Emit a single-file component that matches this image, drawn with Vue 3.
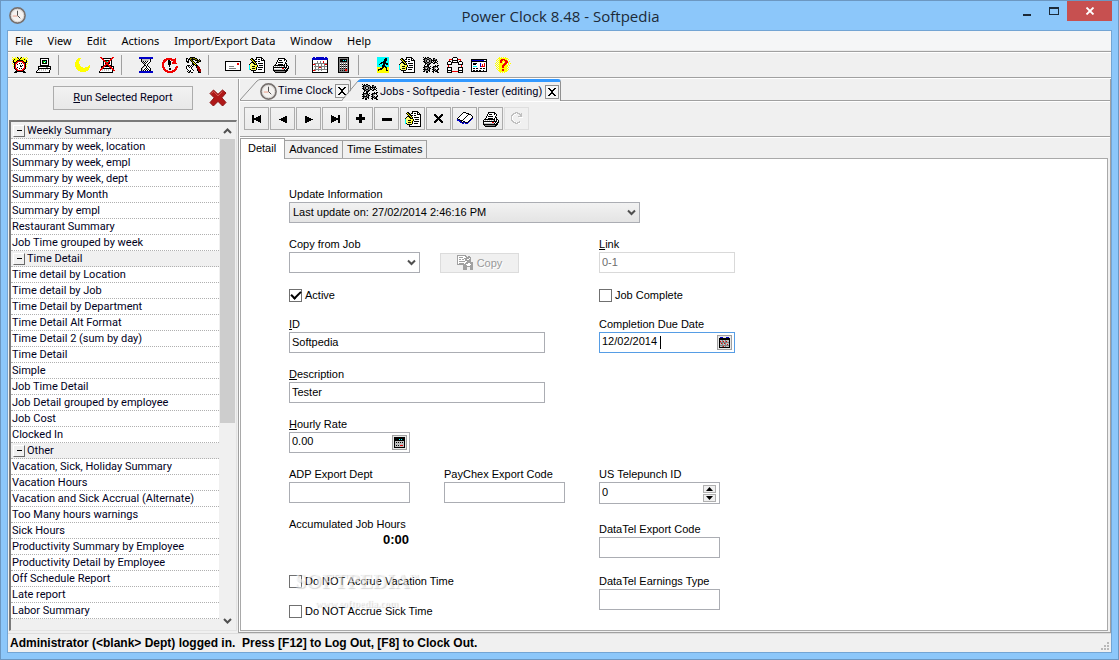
<script setup>
import { h } from 'vue'

const palette = {
  k: '#000000', r: '#f00000', y: '#ffff00', w: '#ffffff', g: '#808080', l: '#c0c0c0',
  b: '#0000c8', c: '#00ffff', n: '#00c000', d: '#a00000', m: '#808000', p: '#ffff70',
}

const bitmaps = {
  alarm: [
    'y..y.ky.yk.y..y.', '.yyyyyk.kyyyyy.y', 'yykyyyykyyyykyy.', '.kyyykkkkkkyyyk.',
    'ykyykrrrrrrkyyky', '.kkkrrwwwwrrkkk.', 'y.krrwwkwkwrrk.y', '.ykrwkwwwwwwrky.',
    '..krwwwwkwkwrk..', '.ykrwwwwkkwwrky.', '..krwkwwwwwwrk..', '..krrwwkwkwrrk..',
    '...krrwwwwrrk...', '....krrrrrrk....', '...kkkkkkkkkk...', '..kkk......kkk..'],
  pc: [
    '................', '....kkkkkkkkk...', '....kwwwwwwwk...', '....kwkkkkkwk...',
    '....kwknnckwk...', '....kwknwnkwk...', '....kwkkkkkwk...', '....kwwwwwwwk...',
    '....kkkkkkkkk...', '..kkkkkkkkkkkkk.', '..kwwwwwwwggwwk.', '..kkkkkkkkkkkkk.',
    '..klwlwlwlwlwwk.', '.kwlwlwlwlwwwk..', 'kwwwwwwwwwwwwk..', 'kkkkkkkkkkkkkk..'],
  moon: [
    '................', '...yyy..........', '..yyy...........', '.yyyy...........',
    '.yyy............', 'yyyy............', 'yyyy............', 'yyyyy...........',
    'yyyyy.........y.', 'yyyyyy.......yy.', '.yyyyyyy..yyyyy.', '.yyyyyyyyyyyyy..',
    '..yyyyyyyyyyyy..', '...yyyyyyyyyy...', '.....yyyyyy.....', '................'],
  pcx: [
    '.rr..........rr.', '..rrkkkkkkkkrr..', '...rrwwwwwwrr...', '....rrkkkkrrk...',
    '....krrncrrwk...', '....kwrrrrkwk...', '....kwkrrkkwk...', '....kwrrrrwwk...',
    '....krrkkrrkk...', '..kkrrkkkkrrkkk.', '..krrwwwwwgrrwk.', '..rrkkkkkkkkrrk.',
    '.rrlwlwlwlwlwrr.', '.rwlwlwlwlwwwkrr', 'kwwwwwwwwwwwwk..', 'kkkkkkkkkkkkkk..'],
  hourglass: [
    '.bbbbbbbbbbbbbb.', '.bbbbbbbbbbbbbb.', '...kllllllllk...', '...klllllllwk...',
    '...klkwkwkwwk...', '....klkwkwwk....', '.....klkwwk.....', '......klwk......',
    '......kkwk......', '.....klwkwk.....', '....klwwkwwk....', '...klwwkwkwwk...',
    '...klwkwkwkwk...', '...klkwkwkwkk...', '.bbbbbbbbbbbbbb.', '.bbbbbbbbbbbbbb.'],
  retry: [
    '................', '....rrrrrr...r..', '..rrrrrrrrrrrr..', '.rrrr.kk.rrrrr..',
    '.rrr..kkk..rrr..', 'rrr...kkk.rrrr..', 'rr....kkk.rrrrr.', 'rr....kkk.......',
    'rr.....k........', 'rr.....k......rr', 'rrr..........rrr', '.rr....kk....rr.',
    '.rrr...kk...rrr.', '..rrrr....rrrr..', '...rrrrrrrrrr...', '.....rrrrrr.....'],
  tools: [
    '....kkkkk.......', 'kk.kmmkmmkk.....', 'k.kkmkkkkmmk.k..', 'k.k.kmk..kkkkmk.',
    'kkk..kmk...kmkk.', '.kk...kyk.kkk...', '......kkyk......', '......kkkyk.....',
    '.kkk.kwk.kkk....', 'kwk.kwk...kdd...', 'kw.kwk....kddd..', 'kwwwwk.....ddd..',
    '.kwwwwk....kddd.', '..k.kwwk...kddd.', '.kwkkww.....kdd.', '..kk.kk.....kkk.'],
  mail: [
    '................', '................', '................', '................',
    'kkkkkkkkkkkkkkkk', 'kwwwwwwwwwwwwwwk', 'kwwwwwwwwwwwrrwk', 'kwwwwwwwwwwwrrwk',
    'kwwwwwwwwwwwwwwk', 'kwwwgggggwwwwwwk', 'kwwwwwwwwwwwwwwk', 'kwwwgggggggwwwwk',
    'kwwwwwwwwwwwwwwk', 'kkkkkkkkkkkkkkkk', '................', '................'],
  handdoc: [
    '.......kkkkkk...', '..kk...kwwwwkk..', '.kykk.kkwkkwkwk.', '..kykkwwwwwwkkkk',
    '...kykkkwkkwwwwk', '..kkkykwwwwwwwwk', '.kppkkykwkkkkkwk', 'kppppkkkwwwwwwwk',
    'cppppypykwkkkkwk', 'cppkkkpykwwwwwwk', 'cpppypykwkkkkkwk', 'cppkkkykwwwwwwwk',
    'ckpppppkwkkkkwwk', '..kkkkkwwwwwwwwk', '....kwwwwwwwwwwk', '....kkkkkkkkkkkk'],
  printer: [
    '................', '.....kkkkkkk....', '.....kwwwwwkk...', '....kwkkkwwkwk..',
    '....kwwwwwwwwk..', '...kwkkkkkwwk...', '...kwwwwwwwwkk..', '..kwwkkkkkwkwk..',
    '.kkkkkkkkkkkwkk.', 'kwlwlwlwlwlkwkwk', 'kkkkkkkkkkkkkkwk', 'kwwwwwwwwrrwkwkk',
    'kllllllllllkwkk.', 'kkkkkkkkkkkkkkk.', '.kggggggggggkk..', '..kkkkkkkkkkk...'],
  calendar: [
    '.bb.bbbbbbbb.bb.', 'bbbbbbbbbbbbbbbb', 'bbbbbbbbbbbbbbbb', 'kwwwwwwwwwwwwwwk',
    'kwwwwgwwgwwrwwwk', 'kwwwwgwwgwwrwwwk', 'kwgggggggggggggk', 'krrgwwgwwgwwgrrk',
    'kwwgwwgwwgwwgwwk', 'kwgggggggggggggk', 'kwwgwwgrrgwwgwwk', 'kwwgwwgwwgwwgwwk',
    'kwgggggggggggggk', 'krrgwwgwwgwwwwwk', 'kwwwwwwwwwwwwwwk', 'kkkkkkkkkkkkkkkk'],
  calc: [
    '..kkkkkkkkkkk...', '..kgggggggggk...', '..kgkkkkkkkgk...', '..kgkkkckckgk...',
    '..kgkkkkkkkgk...', '..kgggggggggk...', '..kgwgwgwgwgk...', '..kgkgkgkgkgk...',
    '..kgwgwgwgwgk...', '..kgkgkgkgkgk...', '..kgwgwgwgwgk...', '..kgkgkgkgkgk...',
    '..kggggggrrgk...', '..kgkgkgkrrgk...', '..kgggggggggk...', '..kkkkkkkkkkk...'],
  walk: [
    '..cccccccccccc..', '..cccccccckkcc..', '..ccccccckkkcc..', '..ccccccckkkcc..',
    '..cccccckkkccc..', '..cccckkkkkccc..', '..ccckkckkkkkc..', '..cckccckkckkc..',
    '..ccccckkkcccc..', '..ccccckkkkccc..', '..yyyyykkykkyy..', '..yyykkkyyykyy..',
    '..ykkkkyyyykyy..', '..ykyyyyyyykky..', '..yyyyyyyyyyyy..', '..yyyyyyyyyyyy..'],
  gears: [
    'k.k.kk..........', '.kkkggkk..kk....', 'kkggkkggk.kggk..', '.kgkllkgkkkkkk..',
    'kkgkllkgk.klk.k.', '.kkgkkggkk.kkk..', '..kkggkk..kk..k.', '..k.kkk.........',
    '.k..kk......k.kk', '.kkkkk.k..kkkkk.', 'kkgggkk..kkgg.k.', '.kg.kgkk..kg...k',
    'kkkkkgk..kkgk.kk', '.kgggkk...kkgkk.', 'kk.kk.k..kk.kkk.', '...kk.....k...kk'],
  people: [
    '......kkkk......', '.....kwwwwk.....', '..rrrkwwwwkrrr..', '..r..kkkkkk..r..',
    '.kkk.kwwwwk.kkk.', 'kwwwkkkkkkkkwwwk', 'kwwwk......kwwwk', 'kkkkk......kkkkk',
    '.r............r.', '.r............r.', 'kkkkk......kkkkk', 'kwwwk......kwwwk',
    'kwwwk......kwwwk', 'kkkkk......kkkkk', 'kwwwkrrrrrrkwwwk', 'kkkkk......kkkkk'],
  screen: [
    '................', '................', 'kkkkkkkkkkkkkkkk', 'kbbbbbbbbbbbbwwk',
    'kkkkkkkkkkkkkkkk', 'kwwwwwwwwwwwwwwk', 'kwkkkkwwwbwwwrwk', 'kwkkkwwwwbwrwrwk',
    'kwwwwwwwwbwrwrwk', 'kwccccwwwbrrrrwk', 'kwwwwwwwwwwwwwwk', 'kwkkwkkwwkkwkkwk',
    'kwwwwwwwwwwwwwwk', 'kwkkwkkwkkwwkwwk', 'kkkkkkkkkkkkkkkk', '................'],
  help: [
    '....y.y.y.y.....', '...yyyyyyyyyy...', '..y.yyrrrryy.y..', '.y.yyrrryrrry...',
    '..y.yrryyyrrr.y.', '.y.yyrry.yrrry..', 'y.y.yyyyyrrr.y.y', '.y.yyyyyrrry.y..',
    'y.y.yyyrrryyy.y.', '.y.yyyyrryyyy...', '..y.yyyrryyy.y..', '.y.yyyyyyyyyy...',
    '..y.yyyrryyy.y..', '...yyyyrryyyy...', '....yyyyyyyy....', '.....y.y.y......'],
  book: [
    '................', '......kkk.......', '.....kwwwkkk....', '....kwwwwwwkkk..',
    '...kwwwwwwkwwwk.', '..kwwwwwwkwwwwwk', '.kwwwwwwkwwwwwwk', 'kwwwwwwkwwwwwwkb',
    'bkkwwwkwwwwwwkb.', 'bbbkkkwwwwwwkb..', '..bbkwkkwwwkb...', '...bbkbbkkkb....',
    '.....bb.bbb.....', '................', '................', '................'],
  first: [
    '................', '................', '................', '................',
    '...kk......k....', '...kk....kkk....', '...kk..kkkkk....', '...kkkkkkkkk....',
    '...kkkkkkkkk....', '...kk..kkkkk....', '...kk....kkk....', '...kk......k....',
    '................', '................', '................', '................'],
  prev: [
    '................', '................', '................', '................',
    '................', '..........kk....', '........kkkk....', '......kkkkkk....',
    '....kkkkkkkk....', '......kkkkkk....', '........kkkk....', '..........kk....',
    '................', '................', '................', '................'],
  plus: [
    '................', '................', '................', '......kkk.......',
    '......kkk.......', '......kkk.......', '...kkkkkkkkk....', '...kkkkkkkkk....',
    '...kkkkkkkkk....', '......kkk.......', '......kkk.......', '......kkk.......',
    '................', '................', '................', '................'],
  minus: [
    '................', '................', '................', '................',
    '................', '................', '................', '...kkkkkkkkkk...',
    '...kkkkkkkkkk...', '...kkkkkkkkkk...', '................', '................',
    '................', '................', '................', '................'],
  cross: [
    '................', '................', '................', '...kk.....kk....',
    '...kkk...kkk....', '....kkk.kkk.....', '.....kkkkk......', '......kkk.......',
    '.....kkkkk......', '....kkk.kkk.....', '...kkk...kkk....', '...kk.....kk....',
    '................', '................', '................', '................'],
  redo: [
    '................', '......lll.......', '....lllwlll.l...', '...llww...lll...',
    '..llw......ll...', '..lw.....llll...', '..lw......wwww..', '..lw............',
    '..lw............', '..llw...........', '...llw....l.....', '....lllwlllw....',
    '......lllww.....', '................', '................', '................'],
  copy: [
    'ggggggggg.......', 'gwwwwwwwgg.gg...', 'gwggggwwwggggg..', 'gwwwwwwgggggwg..',
    'gwggwggwggwwgg..', 'gwwwwwwwgggggg..', 'gwggggggwwgggg..', 'gwwwwwwwwggggggg',
    'gwgggggwgggwwggg', 'gggggggggwwwwwgg', '......ggggwwwggg', '......gggggggggg',
    '......gggg...ggg', '......gggg...ggg', '......gggg...ggg', '................'],
}

function mirror(rows) {
  return rows.map((row) => row.split('').reverse().join(''))
}
bitmaps.next = mirror(bitmaps.prev)
bitmaps.last = mirror(bitmaps.first)

const PixelIcon = (props) => {
  const rects = []
  bitmaps[props.name].forEach((row, y) => {
    let x = 0
    while (x < row.length) {
      let end = x + 1
      while (end < row.length && row[end] === row[x]) end++
      if (row[x] !== '.') {
        const fill = props.name === 'copy' && row[x] === 'g' ? '#a0a0a0' : palette[row[x]]
        rects.push(h('rect', { x, y, width: end - x, height: 1, fill }))
      }
      x = end
    }
  })
  return h('svg', {
    viewBox: '0 0 16 16', width: 16, height: 16,
    'shape-rendering': 'crispEdges', 'aria-hidden': 'true',
  }, rects)
}
PixelIcon.props = ['name']

const CloseMark = () => h('svg', { viewBox: '0 0 8 8', width: 8, height: 8, 'shape-rendering': 'crispEdges', 'aria-hidden': 'true' }, [
  h('path', { d: 'M0 0h2v1h1v1h2V1h1V0h2v1H7v1H6v1H5v2h1v1h1v1h1v1H6V7H5V6H3v1H2v1H0V7h1V6h1V5h1V3H2V2H1V1H0z' }),
])

const ClockIcon = () => h('svg', { viewBox: '0 0 16 16', width: 17, height: 17, 'aria-hidden': 'true' }, [
  h('circle', { cx: 8, cy: 8, r: 7.1, fill: '#f4f2f0', stroke: '#77716f', 'stroke-width': 1.6 }),
  h('circle', { cx: 8, cy: 8, r: 5.9, fill: 'none', stroke: '#cfcac8', 'stroke-width': 0.7 }),
  h('path', { d: 'M3.500 8.500H8', stroke: '#e89880', 'stroke-width': 0.9 }),
  h('path', { d: 'M8 3.500V8L10.600 10.600', fill: 'none', stroke: '#4a4a4a', 'stroke-width': 0.9 }),
])

const menus = ['File', 'View', 'Edit', 'Actions', 'Import/Export Data', 'Window', 'Help']

const toolGroups = [
  [['alarm', 'Clock in'], ['pc', 'Workstation']],
  [['moon', 'Night shift'], ['pcx', 'Disconnect']],
  [['hourglass', 'Hours'], ['retry', 'Recalculate'], ['tools', 'Setup']],
  [['mail', 'Messages'], ['handdoc', 'Report'], ['printer', 'Print']],
  [['calendar', 'Calendar'], ['calc', 'Calculator']],
  [['walk', 'Employees'], ['handdoc', 'Edit times'], ['gears', 'Jobs'], ['people', 'Departments'], ['screen', 'Display'], ['help', 'Help']],
]

const recordButtons = [
  ['first', 'First'], ['prev', 'Previous'], ['next', 'Next'], ['last', 'Last'], ['plus', 'Add'], ['minus', 'Remove'],
  ['handdoc', 'Edit'], ['cross', 'Cancel'], ['book', 'Browse'], ['printer', 'Print'], ['redo', 'Refresh'],
]

const reportGroups = [
  { title: 'Weekly Summary', items: ['Summary by week, location', 'Summary by week, empl', 'Summary by week, dept', 'Summary By Month', 'Summary by empl', 'Restaurant Summary', 'Job Time grouped by week'] },
  { title: 'Time Detail', items: ['Time detail by Location', 'Time detail by Job', 'Time Detail by Department', 'Time Detail Alt Format', 'Time Detail 2 (sum by day)', 'Time Detail', 'Simple', 'Job Time Detail', 'Job Detail grouped by employee', 'Job Cost', 'Clocked In'] },
  { title: 'Other', items: ['Vacation, Sick, Holiday Summary', 'Vacation Hours', 'Vacation and Sick Accrual (Alternate)', 'Too Many hours warnings', 'Sick Hours', 'Productivity Summary by Employee', 'Productivity Detail by Employee', 'Off Schedule Report', 'Late report', 'Labor Summary'] },
]
</script>

<template>
  <div class="window">
    <header class="titlebar">
      <ClockIcon />
      <h1>Power Clock 8.48 - Softpedia</h1>
      <div class="caption">
        <button aria-label="Minimize"><svg width="12" height="12" viewBox="0 0 12 12"><path d="M2 9h8v2H2z" fill="#1c2a38" /></svg></button>
        <button aria-label="Maximize"><svg width="12" height="12" viewBox="0 0 12 12" shape-rendering="crispEdges"><path d="M2 4h8v5H2zM1 2v8h10V2z" fill="#1c2a38" fill-rule="evenodd" /></svg></button>
        <button class="close" aria-label="Close"><svg width="10" height="8" viewBox="0 0 10 8"><path d="M1.500.5l7 7M8.500.5l-7 7" stroke="#fff" stroke-width="1.8" /></svg></button>
      </div>
    </header>

    <div class="client">
      <nav class="menubar">
        <button v-for="m in menus" :key="m">{{ m }}</button>
      </nav>

      <div class="toolbar">
        <div v-for="(group, i) in toolGroups" :key="i" class="tool-group">
          <button v-for="[icon, label] in group" :key="label" :aria-label="label"><PixelIcon :name="icon" /></button>
        </div>
      </div>

      <div class="workspace">
        <aside class="reports">
          <div class="report-actions">
            <button class="run"><span><u>R</u>un Selected Report</span></button>
            <button class="delete" aria-label="Close report list">
              <svg width="18" height="18" viewBox="0 0 18 18">
                <path d="M1 4.500L4.500 1 9 5.300 13.500 1 17 4 12.800 8.800 17 13.500 13.600 17 9 12.400 4.400 17 1 13.600 5.200 8.800z" fill="#b01818" stroke="#8c1010" />
                <path d="M2.400 4.400L4.500 2.400 9 6.800l4.400-4.300" fill="none" stroke="#d86058" />
              </svg>
            </button>
          </div>
          <div class="list">
            <div class="rows">
              <template v-for="g in reportGroups" :key="g.title">
                <div class="row group"><button class="fold" aria-label="Collapse group"></button>{{ g.title }}</div>
                <div v-for="item in g.items" :key="item" class="row">{{ item }}</div>
              </template>
            </div>
            <div class="scroll">
              <svg width="9" height="6" viewBox="0 0 9 6"><path d="M1 5l3.500-3.500L8 5" fill="none" stroke="#505050" stroke-width="2" /></svg>
              <div class="track"><div class="thumb"></div></div>
              <svg width="9" height="6" viewBox="0 0 9 6"><path d="M1 1l3.500 3.500L8 1" fill="none" stroke="#505050" stroke-width="2" /></svg>
            </div>
          </div>
        </aside>

        <main class="document">
          <div class="doc-tabs">
            <div class="doc-tab">
              <svg class="slant" width="20" height="21" viewBox="0 0 20 21"><path d="M0 21L17 2Q19 0 20 0V21z" fill="#f0f0f0" /><path d="M0 21L17 2Q19 .5 20 .5" fill="none" stroke="#909090" /></svg>
              <div class="doc-body">
                <ClockIcon /><span>Time Clock</span>
                <button aria-label="Close Time Clock"><CloseMark /></button>
              </div>
            </div>
            <div class="doc-tab active">
              <svg class="slant" width="20" height="22" viewBox="0 0 20 22"><path d="M0 22L17 2Q19 0 20 0V22z" fill="#f0f0f0" /><path d="M0 21L16 2Q18 .5 20 .5" fill="none" stroke="#909090" /><path d="M15 3l2-2q1-1 3-1v3z" fill="#3399ff" /></svg>
              <div class="doc-body">
                <PixelIcon name="gears" /><span>Jobs - Softpedia - Tester (editing)</span>
                <button aria-label="Close Jobs"><CloseMark /></button>
              </div>
            </div>
          </div>

          <div class="record-bar">
            <button v-for="[icon, label] in recordButtons" :key="label" :aria-label="label" :disabled="icon === 'redo'"><PixelIcon :name="icon" /></button>
          </div>

          <div class="page-wrap">
            <div class="page-tabs">
              <button class="selected">Detail</button>
              <button>Advanced</button>
              <button>Time Estimates</button>
            </div>
            <form class="page" @submit.prevent>
              <div class="stack left">
                <div class="field update">
                  <label for="update">Update Information</label>
                  <div class="combo shaded">
                    <select id="update"><option>Last update on: 27/02/2014 2:46:16 PM</option></select>
                    <svg width="9" height="7" viewBox="0 0 9 7"><path d="M1 1.500l3.500 3.500L8 1.500" fill="none" stroke="#505050" stroke-width="2" /></svg>
                  </div>
                </div>
                <div class="pair">
                  <div class="field copy-from">
                    <label for="copyfrom">Copy from Job</label>
                    <div class="combo">
                      <select id="copyfrom"><option></option></select>
                      <svg width="9" height="7" viewBox="0 0 9 7"><path d="M1 1.500l3.500 3.500L8 1.500" fill="none" stroke="#505050" stroke-width="2" /></svg>
                    </div>
                  </div>
                  <button class="copy" disabled><PixelIcon name="copy" />Copy</button>
                </div>
                <label class="check"><input type="checkbox" checked />Active</label>
                <div class="field wide"><label for="id"><u>I</u>D</label><input id="id" type="text" value="Softpedia" /></div>
                <div class="field wide"><label for="desc"><u>D</u>escription</label><input id="desc" type="text" value="Tester" /></div>
                <div class="field narrow">
                  <label for="rate"><u>H</u>ourly Rate</label>
                  <div class="box"><input id="rate" type="text" value="0.00" /><button class="picker" aria-label="Calculator">
                    <svg width="11" height="11" viewBox="0 0 11 11" shape-rendering="crispEdges"><path d="M0 0h11v11H0z" /><path d="M1 4h9v6H1z" fill="#c0c0c0" /><path d="M2 5h1v1H2zM4 5h1v1H4zM6 5h1v1H6zM8 5h1v1H8zM2 8h1v1H2zM4 8h1v1H4z" /><path d="M5 2h1v1H5zM7 2h1v1H7z" fill="#0ff" /><path d="M6 8h3v1H6z" fill="#e00000" /></svg>
                  </button></div>
                </div>
                <div class="pair exports">
                  <div class="field narrow"><label for="adp">ADP Export Dept</label><input id="adp" type="text" /></div>
                  <div class="field narrow"><label for="paychex">PayChex Export Code</label><input id="paychex" type="text" /></div>
                </div>
                <div class="hours"><span>Accumulated Job Hours</span><output>0:00</output></div>
                <div class="accruals">
                  <label class="check"><input type="checkbox" />Do NOT Accrue Vacation Time</label>
                  <label class="check"><input type="checkbox" />Do NOT Accrue Sick Time</label>
                  <div class="watermark"><b>SOFTPEDIA<sup>™</sup></b><span>www.softpedia.com</span></div>
                </div>
              </div>

              <div class="stack right">
                <div class="field medium"><label for="link"><u>L</u>ink</label><input id="link" type="text" value="0-1" disabled /></div>
                <label class="check"><input type="checkbox" />Job Complete</label>
                <div class="field medium due">
                  <label for="due">Completion Due Date</label>
                  <div class="box focus"><input id="due" type="text" value="12/02/2014" /><button class="picker" aria-label="Calendar">
                    <svg width="11" height="11" viewBox="0 0 11 11" shape-rendering="crispEdges"><path d="M0 1h11v10H0z" /><path d="M1 0h3v1H1zM7 0h3v1H7z" fill="#0000c0" /><path d="M1 3h9v7H1z" fill="#c0c0c0" /><path d="M3 3h1v7H3zM6 3h1v7H6zM1 5h9v1H1zM1 8h9v1H1z" fill="#808080" /><path d="M1 4h1v1H1zM4 4h1v1H4zM7 4h1v1H7zM2 6h1v1H2zM5 6h1v1H5zM8 7h1v1H8zM4 9h1v1H4z" fill="#e00000" /></svg>
                  </button><i class="caret"></i></div>
                </div>
                <div class="field narrow telepunch">
                  <label for="tele">US Telepunch ID</label>
                  <div class="box"><input id="tele" type="text" value="0" />
                    <div class="spin">
                      <button aria-label="Increase"><svg width="7" height="4" viewBox="0 0 7 4"><path d="M0 4L3.500 0 7 4z" /></svg></button>
                      <button aria-label="Decrease"><svg width="7" height="4" viewBox="0 0 7 4"><path d="M0 0l3.500 4L7 0z" /></svg></button>
                    </div>
                  </div>
                </div>
                <div class="stack datatel">
                  <div class="field narrow"><label for="dtcode">DataTel Export Code</label><input id="dtcode" type="text" /></div>
                  <div class="field narrow"><label for="dttype">DataTel Earnings Type</label><input id="dttype" type="text" /></div>
                </div>
              </div>
            </form>
          </div>
        </main>
      </div>

      <footer class="status">
        <span>Administrator (&lt;blank&gt; Dept) logged in.&nbsp; Press [F12] to Log Out, [F8] to Clock Out.</span>
        <svg width="9" height="9" viewBox="0 0 9 9"><path d="M6 0h2v2H6zM3 3h2v2H3zM6 3h2v2H6zM0 6h2v2H0zM3 6h2v2H3zM6 6h2v2H6z" fill="#b8b8b8" /></svg>
      </footer>
    </div>
  </div>
</template>

<style>
body { background: #8cc7fa; }
</style>

<style scoped>
* { box-sizing: border-box; }
button, input, select { font: inherit; color: inherit; margin: 0; padding: 0; border: 0; background: none; border-radius: 0; outline: 0; min-width: 0; }
button { display: flex; align-items: center; justify-content: center; white-space: nowrap; }
svg { display: block; flex: none; }

.window {
  min-height: 100vh; display: flex; flex-direction: column;
  border: 1px solid #6c97c1; background: #8cc7fa; padding: 0 6px 6px;
  font-family: "Liberation Sans", Arial, sans-serif; font-size: 11px; line-height: 15px; color: #000;
}
.titlebar { height: 29px; display: grid; grid-template-columns: 1fr auto 1fr; align-items: center; padding-left: 2px; }
.titlebar h1 { margin: 0; font: 15px/20px "Open Sans", "Noto Sans", sans-serif; color: #1c2a38; }
.caption { display: flex; justify-self: end; align-self: start; }
.caption button { width: 27px; height: 20px; }
.caption .close { width: 45px; background: #c75050; }

.client { flex: 1; display: flex; flex-direction: column; border: 1px solid #73a5d4; background: #f0f0f0; }
.menubar { display: flex; gap: 1px; height: 20px; background: #f5f6f7; border-bottom: 1px solid #ebebeb; font: 11px/20px "Noto Sans", sans-serif; }
.menubar button { padding: 0 7px; }
.toolbar { display: flex; height: 27px; border-top: 1px solid #a0a0a0; border-bottom: 1px solid #a0a0a0; box-shadow: inset 0 1px #fff, 0 1px #fff; align-items: center; padding-top: 1px; }
.tool-group { display: flex; align-items: center; }
.tool-group button { width: 24px; height: 24px; }
.tool-group + .tool-group { padding-left: 15px; background: linear-gradient(#a0a0a0, #a0a0a0) 2px 2px / 1px 20px no-repeat; }

.workspace { flex: 1; display: flex; min-height: 0; padding-top: 1px; }
.reports { width: 230px; flex: none; display: flex; flex-direction: column; font: 11px/15px Roboto, "Liberation Sans", sans-serif; color: #00001c; padding: 0 1px 2px 1px; }
.report-actions { height: 41px; display: flex; align-items: center; padding: 0 0 4px 44px; gap: 16px; }
.run { width: 140px; height: 24px; border: 1px solid #acacac; background: linear-gradient(#f2f2f2, #e8e8e8); }
.list { flex: 1; display: flex; border: 1px solid #e3e3e3; border-top: 2px solid #7a7a7a; border-left: 2px solid #7a7a7a; }
.rows { flex: 1; min-width: 0; padding-top: 1px; }
.row { height: 16px; background: #fff; border-bottom: 1px dotted #b0b0b0; padding-left: 1px; white-space: nowrap; display: flex; align-items: center; }
.row.group { background: #f0f0f0; padding-left: 2px; gap: 2px; }
.fold { width: 12px; height: 12px; background: linear-gradient(#000, #000) center / 5px 1px no-repeat #f0f0f0; border: 1px solid #fff; border-right-color: #696969; border-bottom-color: #696969; }
.scroll { width: 17px; display: flex; flex-direction: column; align-items: center; padding: 6px 0; gap: 5px; }
.track { flex: 1; width: 15px; }
.thumb { height: 60%; background: #cdcdcd; }

.document { flex: 1; min-width: 0; display: flex; flex-direction: column; border: 1px solid #a0a0a0; border-width: 0 1px 1px; box-shadow: inset 1px 0 #fff; padding-left: 1px; }
.doc-tabs { display: flex; height: 22px; font: 11px/14px Roboto, "Liberation Sans", sans-serif; background: linear-gradient(#a0a0a0, #a0a0a0) 0 21px / 100% 1px no-repeat; color: #00001c; }
.doc-tab { display: flex; height: 21px; }
.doc-tab.active { height: 22px; margin-left: -9px; z-index: 1; }
.doc-body { display: flex; align-items: center; border-top: 1px solid #909090; border-right: 1px solid #909090; border-radius: 0 3px 0 0; background: #f0f0f0; gap: 1px; padding: 2px 1px 0 0; white-space: nowrap; }
.doc-body button { width: 14px; height: 14px; border: 1px solid #909090; background: #f6f6f6; margin-left: 1px; }
.active .doc-body { border-top: 3px solid #3399ff; padding-top: 0; gap: 2px; }
.record-bar { height: 36px; display: flex; gap: 1px; align-items: center; padding: 0 4px; border-bottom: 1px solid #a0a0a0; box-shadow: inset 0 1px #fff; }
.record-bar button { width: 25px; height: 23px; border: 1px solid #acacac; background: linear-gradient(#f2f2f2, #ebebeb); }
.record-bar button:disabled { border-color: #dedede; background: #f0f0f0; }

.page-wrap { flex: 1; display: flex; flex-direction: column; padding: 1px 2px 1px 0; box-shadow: inset 0 1px #fff; }
.page-tabs { display: flex; align-items: flex-end; height: 20px; }
.page-tabs button { height: 18px; border: 1px solid #a0a0a0; border-bottom: 0; border-left-width: 0; background: #f0f0f0; padding: 0 4px; }
.page-tabs .selected { height: 21px; margin-bottom: -1px; background: #fff; border-left-width: 1px; padding: 0 8px 2px 7px; z-index: 1; }
.page { flex: 1; display: flex; align-items: flex-start; background: #fff; border: 1px solid #a9a9a9; padding: 28px 48px 0; }

.stack { display: flex; flex-direction: column; align-items: flex-start; gap: 14px; }
.left { width: 310px; flex: none; }
.right { padding-top: 50px; }
.field { display: flex; flex-direction: column; }
.field label { height: 15px; white-space: nowrap; }
.field > input, .box, .combo { height: 21px; border: 1px solid #abadb3; background: #fff; }
.field input { padding: 0 2px 2px; width: 100%; }
.field > input:disabled { border-color: #d9d9d9; color: #6d6d6d; }
.update { width: 351px; }
.copy-from { width: 131px; }
.wide { width: 256px; }
.narrow { width: 121px; }
.medium { width: 136px; }
.combo { display: grid; align-items: center; }
.combo select { grid-area: 1 / 1; appearance: none; width: 100%; height: 19px; padding: 0 3px; }
.combo svg { grid-area: 1 / 1; justify-self: end; margin-right: 3px; pointer-events: none; }
.shaded { background: linear-gradient(#f2f2f2, #e4e4e4); }
.pair { display: flex; align-items: flex-end; gap: 20px; }
.exports { gap: 34px; }
.copy { width: 79px; height: 20px; border: 1px solid #dcdcdc; background: #f0f0f0; color: #9a9a9a; gap: 4px; text-shadow: 1px 1px #fff; }
.box { display: flex; align-items: center; padding-right: 2px; }
.box.focus { border-color: #569de5; position: relative; }
.caret { position: absolute; left: 60px; top: 3px; width: 1px; height: 13px; background: #000; }
.picker { width: 15px; height: 15px; flex: none; border: 1px solid #a0a0a0; background: #e8e8e8; }
.spin { display: flex; flex-direction: column; gap: 1px; flex: none; margin-right: 1px; }
.spin button { width: 13px; height: 8px; border: 1px solid #b0b0b0; background: #f0f0f0; }
.check { display: flex; align-items: center; height: 16px; gap: 3px; white-space: nowrap; }
.check input { appearance: none; width: 13px; height: 13px; border: 1px solid #707070; background: #fff; display: grid; place-items: center; }
.check input:checked::before { content: ""; width: 8px; height: 4px; border: solid #000; border-width: 0 0 2px 2px; transform: translateY(-1px) rotate(-45deg); }
.hours { width: 120px; display: flex; flex-direction: column; white-space: nowrap; }
.hours output { align-self: flex-end; font-weight: bold; font-size: 13px; line-height: 16px; }
.accruals { display: flex; flex-direction: column; gap: 14px; margin-top: 11px; position: relative; }
.watermark { position: absolute; left: 6px; top: -4px; display: flex; flex-direction: column; align-items: center; color: rgba(255, 255, 255, .6); text-shadow: 1px 1px 1px rgba(0, 0, 0, .16); pointer-events: none; white-space: nowrap; }
.watermark b { font: bold 20px/24px "Liberation Serif", serif; }
.watermark sup { font-size: 9px; line-height: 9px; }
.watermark span { font: bold 10px/14px "Liberation Serif", serif; margin-top: 4px; }
.telepunch { margin-top: 100px; }
.telepunch .box { height: 22px; }
.datatel { gap: 16px; padding-top: 4px; }

.status { height: 19px; display: flex; justify-content: space-between; align-items: center; padding: 1px 1px 0 2px; font-weight: bold; font-size: 12px; box-shadow: inset 0 1px #dcdcdc; }
.status svg { align-self: flex-end; margin-bottom: 1px; }
</style>
